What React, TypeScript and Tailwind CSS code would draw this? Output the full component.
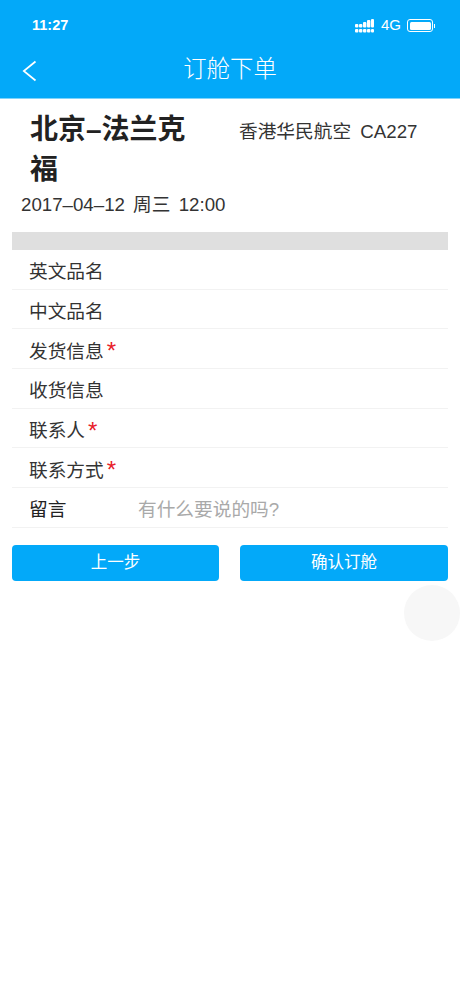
const rows = [
  { label: '英文品名' },
  { label: '中文品名' },
  { label: '发货信息', required: true },
  { label: '收货信息' },
  { label: '联系人', required: true },
  { label: '联系方式', required: true },
];

function SignalIcon() {
  return (
    <svg width="19" height="14" viewBox="0 0 19 14" fill="white">
      <rect x="0" y="5" width="3.4" height="3.4" rx="1" />
      <rect x="0" y="10" width="3.4" height="3.4" rx="1" />
      <rect x="4" y="5" width="3.4" height="3.4" rx="1" />
      <rect x="4" y="10" width="3.4" height="3.4" rx="1" />
      <rect x="8" y="3" width="3.4" height="5.4" rx="1" />
      <rect x="8" y="10" width="3.4" height="3.4" rx="1" />
      <rect x="12" y="1" width="3.4" height="7.4" rx="1" />
      <rect x="12" y="10" width="3.4" height="3.4" rx="1" />
      <rect x="16" y="0" width="3" height="8.4" rx="1" />
      <rect x="16" y="10" width="3" height="3.4" rx="1" />
    </svg>
  );
}

function BatteryIcon() {
  return (
    <div className="flex items-center">
      <div className="w-[26px] h-[13px] rounded-[3px] border border-white p-[1.5px]">
        <div className="w-full h-full rounded-[1.5px] bg-white" />
      </div>
      <div className="w-[1px] h-[4px] bg-white ml-[1px]" />
    </div>
  );
}

function BackIcon() {
  return (
    <svg className="absolute left-[22px] top-[10px]" width="15" height="22" viewBox="0 0 15 22" fill="none" stroke="white" strokeWidth="1.7">
      <path d="M13.5 1.5 L1.8 11 L13.5 20.5" />
    </svg>
  );
}

export default function App() {
  return (
    <div
      className="relative w-[460px] h-[996px] bg-white overflow-hidden text-[#333333]"
      style={{ fontFamily: '"Liberation Sans", "Noto Sans CJK SC", sans-serif' }}
    >
      {/* Header */}
      <div className="h-[99px] bg-[#03a9f9] text-white border-b border-[#7fd3fb]">
        <div className="h-[50px] pl-[32px] pr-[25px] pt-[1px] flex items-center justify-between">
          <span className="text-[14.5px] font-bold">11:27</span>
          <div className="flex items-center">
            <SignalIcon />
            <span className="text-[15px] ml-[7px] mr-[6px]">4G</span>
            <BatteryIcon />
          </div>
        </div>
        <div className="relative h-[38px] pt-[2px] flex items-center justify-center">
          <BackIcon />
          <span className="text-[23.4px] font-light">订舱下单</span>
        </div>
      </div>

      {/* Flight info */}
      <div className="flex pl-[30px] pt-[11px]">
        <div className="w-[165px] text-[28px] leading-[40px] font-bold text-[#222222]">北京–法兰克福</div>
        <div className="ml-[44px] pt-[6px] text-[18.7px] leading-[32px] [word-spacing:4px]">香港华民航空 CA227</div>
      </div>
      <div className="pl-[21px] text-[18.7px] leading-[30px] [word-spacing:3px]">2017–04–12 周三 12:00</div>

      {/* Form */}
      <div className="mx-[12px] mt-[12px]">
        <div className="h-[18px] bg-[#dfdfdf]" />
        {rows.map((row) => (
          <div key={row.label} className="h-[39.7px] pl-[17px] pt-[6px] flex items-center border-b border-[#f2f2f2] text-[18.7px]">
            {row.label}
            {row.required && <span className="text-[#e8202a] italic text-[24px] leading-none ml-[2px] mt-[-1px]">*</span>}
          </div>
        ))}
        <div className="h-[39.7px] pl-[17px] pt-[6px] flex items-center border-b border-[#f2f2f2] text-[18.7px]">
          <span className="w-[109px] text-[#222222]">留言</span>
          <span className="text-[#a9a9a9]">有什么要说的吗?</span>
        </div>
      </div>

      {/* Buttons */}
      <div className="mx-[12px] mt-[17px] flex justify-between">
        <button className="w-[207px] h-[36px] rounded-[4px] bg-[#03a9f9] text-white text-[16.5px]">上一步</button>
        <button className="w-[208px] h-[36px] rounded-[4px] bg-[#03a9f9] text-white text-[16.5px]">确认订舱</button>
      </div>

      {/* Floating ball */}
      <div className="absolute left-[404px] top-[585px] w-[56px] h-[56px] rounded-full bg-[#f7f7f7]" />
    </div>
  );
}
